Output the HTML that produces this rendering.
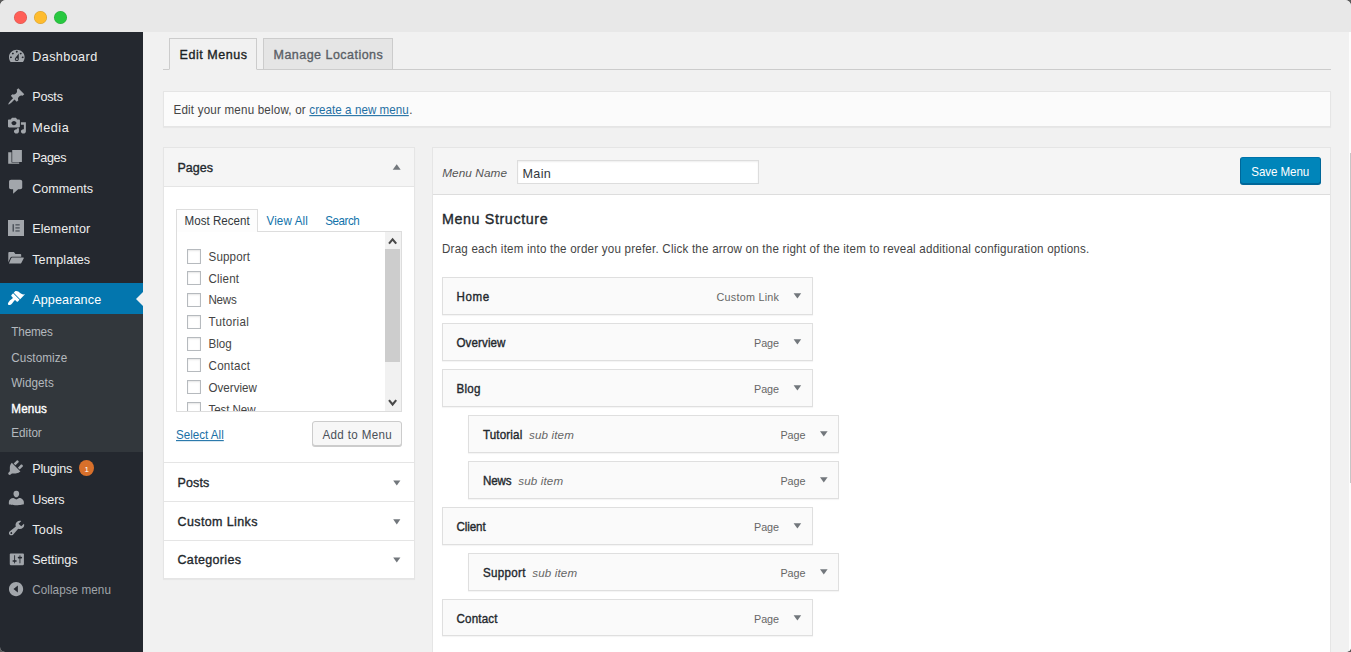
<!DOCTYPE html>
<html><head><meta charset="utf-8"><title>Menus</title><style>
*{margin:0;padding:0}
html,body{width:1351px;height:652px;overflow:hidden;background:#5a5a5a}
body{font-family:"Liberation Sans",sans-serif;}
#win{position:absolute;left:0;top:0;width:1351px;height:652px;overflow:hidden;border-radius:6px 6px 5px 5px;background:#f1f1f1}
.r{position:absolute;display:block}
.t{position:absolute;display:block;white-space:nowrap}
</style></head><body><div id="win">
<div class="r " style="left:0px;top:0px;width:1351px;height:32px;background:#e8e8e8;"></div><div class="r " style="left:13.8px;top:10.6px;width:13px;height:13px;background:#ff5f57;border-radius:50%;box-shadow:inset 0 0 0 .6px rgba(0,0,0,.16);"></div><div class="r " style="left:33.8px;top:10.6px;width:13px;height:13px;background:#febc2e;border-radius:50%;box-shadow:inset 0 0 0 .6px rgba(0,0,0,.16);"></div><div class="r " style="left:53.8px;top:10.6px;width:13px;height:13px;background:#28c840;border-radius:50%;box-shadow:inset 0 0 0 .6px rgba(0,0,0,.16);"></div><div class="r " style="left:0px;top:32px;width:143px;height:620px;background:#24282f;"></div><div class="r " style="left:0px;top:283px;width:143px;height:31px;background:#0376ae;"></div><div class="r " style="left:0px;top:314px;width:143px;height:138px;background:#32373c;"></div><div class="r" style="left:136px;top:291.5px;width:0;height:0;border:7px solid transparent;border-right-color:#f1f1f1;border-left-width:0"></div><svg class="r" style="left:6.54px;top:46.78px" width="19.62" height="18.77" viewBox="0 0 20 20" preserveAspectRatio="none"><path fill="#a2a6ab" d="M3.76 16h12.48c1.1-1.37 1.76-3.11 1.76-5 0-4.42-3.58-8-8-8s-8 3.58-8 8c0 1.89.66 3.63 1.76 5zM10 4c.55 0 1 .45 1 1s-.45 1-1 1-1-.45-1-1 .45-1 1-1zM6 6c.55 0 1 .45 1 1s-.45 1-1 1-1-.45-1-1 .45-1 1-1zm8 0c.55 0 1 .45 1 1s-.45 1-1 1-1-.45-1-1 .45-1 1-1zm-5.37 5.55L12 7v6c0 1.1-.9 2-2 2s-2-.9-2-2c0-.57.24-1.08.63-1.45zM4 10c.55 0 1 .45 1 1s-.45 1-1 1-1-.45-1-1 .45-1 1-1zm12 0c.55 0 1 .45 1 1s-.45 1-1 1-1-.45-1-1 .45-1 1-1zm-5 3c0-.55-.45-1-1-1s-1 .45-1 1 .45 1 1 1 1-.45 1-1z"/></svg><span class="t" style="left:32.2px;top:46.9px;font-size:12.60px;line-height:20px;color:#eee;letter-spacing:0.420px;">Dashboard</span><svg class="r" style="left:6.71px;top:86.56px" width="18.57" height="18.92" viewBox="0 0 20 20" preserveAspectRatio="none"><path fill="#a2a6ab" d="M10.44 3.02l1.82-1.82 6.36 6.35-1.83 1.82c-1.05-.68-2.48-.57-3.41.36l-.75.75c-.92.93-1.04 2.35-.35 3.41l-1.83 1.82-2.41-2.41-2.8 2.79c-.42.42-3.38 2.71-3.8 2.29s1.86-3.39 2.28-3.81l2.79-2.79L4.1 9.36l1.83-1.82c1.05.69 2.48.57 3.4-.36l.75-.75c.93-.92 1.05-2.35.36-3.41z"/></svg><span class="t" style="left:32.2px;top:86.6px;font-size:12.60px;line-height:20px;color:#eee;letter-spacing:-0.178px;">Posts</span><svg class="r" style="left:6.71px;top:117.13px" width="19.89" height="17.44" viewBox="0 0 20 20" preserveAspectRatio="none"><path fill="#a2a6ab" d="M13 11V4c0-.55-.45-1-1-1h-1.67L9 1H5L3.67 3H2c-.55 0-1 .45-1 1v7c0 .55.45 1 1 1h10c.55 0 1-.45 1-1zM7 4.5c1.38 0 2.5 1.12 2.5 2.5S8.38 9.5 7 9.5 4.500 8.380 4.500 7 5.620 4.500 7 4.500zM14 6h5v10.500c0 1.380-1.120 2.500-2.500 2.500S14 17.880 14 16.500s1.120-2.500 2.500-2.500c.170 0 .340.020.500.050V9h-3V6zm-4 8.050V13h2v3.500c0 1.380-1.120 2.500-2.500 2.500S7 17.880 7 16.500 8.120 14 9.500 14c.170 0 .340.020.500.050z"/></svg><span class="t" style="left:32.2px;top:117.9px;font-size:12.60px;line-height:20px;color:#eee;letter-spacing:0.546px;">Media</span><svg class="r" style="left:0;top:140px" width="40" height="40" viewBox="0 140 40 40"><path fill="#a2a6ab" d="M12.200 150h9.700v11.900h-9.700zM8.200 152.200h3.300v10.400h7.700v1.200H8.200z"/></svg><span class="t" style="left:32.2px;top:147.9px;font-size:12.60px;line-height:20px;color:#eee;letter-spacing:-0.332px;">Pages</span><svg class="r" style="left:5.65px;top:178.36px" width="20.31" height="17.38" viewBox="0 0 20 20" preserveAspectRatio="none"><path fill="#a2a6ab" d="M5 2h9c1.100 0 2 .900 2 2v7c0 1.100-.900 2-2 2h-2l-5 5v-5H5c-1.100 0-2-.900-2-2V4c0-1.100.900-2 2-2z"/></svg><span class="t" style="left:32.2px;top:178.8px;font-size:12.60px;line-height:20px;color:#eee;letter-spacing:0.012px;">Comments</span><svg class="r" style="left:8px;top:220px" width="16" height="16" viewBox="0 0 16 16"><rect x="0" y="0" width="16" height="16" fill="#a2a6ab"/><g fill="#4d535b"><rect x="4.500" y="4.200" width="1.500" height="7.400"/><rect x="7.400" y="4.200" width="4.300" height="1.300"/><rect x="7.400" y="7.250" width="4.300" height="1.300"/><rect x="7.400" y="10.300" width="4.300" height="1.300"/></g></svg><span class="t" style="left:32.2px;top:218.5px;font-size:12.60px;line-height:20px;color:#eee;letter-spacing:0.072px;">Elementor</span><svg class="r" style="left:0;top:240px" width="40" height="40" viewBox="0 240 40 40"><path fill="#a2a6ab" d="M8.300 253q0-.900.900-.900h4.700l1.500 1.800h4.900q.900 0 .900.900v1.900h-9.400q-.900 0-1.300.800l-2.200 4.800zM12.100 257.600h11.300q.700 0 .400.600l-2.500 4.700q-.300.500-1 .500H8.900l2.300-5.100q.300-.700.900-.700z"/></svg><span class="t" style="left:32.2px;top:249.9px;font-size:12.60px;line-height:20px;color:#eee;letter-spacing:0.072px;">Templates</span><svg class="r" style="left:6.45px;top:458.49px" width="19.19" height="19.22" viewBox="0 0 20 20" preserveAspectRatio="none"><path fill="#a2a6ab" d="M13.110 4.360L9.870 7.600 8 5.730l3.240-3.240c.350-.340 1.050-.200 1.560.320.520.510.660 1.210.310 1.550zm-8 1.770l.910-1.120 9.010 9.010-1.190.840c-.710.710-2.630 1.160-3.820 1.160H6.140L4.900 17.260c-.590.590-1.540.590-2.120 0-.590-.580-.590-1.530 0-2.120L4 13.900V10.040c0-1.190.400-3.200 1.110-3.910zm7.260 3.970l3.240-3.240c.340-.350 1.040-.210 1.550.310.520.510.660 1.210.310 1.550l-3.240 3.250z"/></svg><span class="t" style="left:32.2px;top:458.5px;font-size:12.60px;line-height:20px;color:#eee;letter-spacing:-0.187px;">Plugins</span><svg class="r" style="left:5.54px;top:488.80px" width="20.72" height="17.96" viewBox="0 0 20 20" preserveAspectRatio="none"><path fill="#a2a6ab" d="M10 9.250c-2.270 0-2.730-3.440-2.730-3.440C7 4.020 7.820 2 9.970 2c2.160 0 2.980 2.020 2.710 3.810 0 0-.410 3.440-2.680 3.440zm0 2.570L12.720 10c2.390 0 4.520 2.330 4.520 4.530v2.490s-3.650 1.130-7.240 1.130c-3.650 0-7.240-1.130-7.240-1.130v-2.490c0-2.250 1.940-4.480 4.470-4.480z"/></svg><span class="t" style="left:32.2px;top:490.1px;font-size:12.60px;line-height:20px;color:#eee;letter-spacing:-0.151px;">Users</span><svg class="r" style="left:6.59px;top:518.77px" width="19.12" height="18.12" viewBox="0 0 20 20" preserveAspectRatio="none"><path fill="#a2a6ab" d="M16.680 9.770c-1.340 1.340-3.300 1.670-4.950.990l-5.410 6.520c-.990.990-2.590.990-3.580 0s-.990-2.590 0-3.570l6.520-5.420c-.680-1.650-.350-3.610.990-4.950 1.280-1.280 3.120-1.620 4.720-1.060l-2.890 2.890 2.820 2.820 2.860-2.870c.530 1.580.180 3.390-1.080 4.650zM3.810 16.210c.400.390 1.040.390 1.430 0 .400-.400.400-1.040 0-1.430-.390-.400-1.030-.400-1.430 0-.390.390-.390 1.030 0 1.430z"/></svg><span class="t" style="left:32.2px;top:519.9px;font-size:12.60px;line-height:20px;color:#eee;letter-spacing:0.271px;">Tools</span><svg class="r" style="left:7.88px;top:550.69px" width="17.69" height="16.71" viewBox="0 0 20 20" preserveAspectRatio="none"><path fill="#a2a6ab" d="M18 16V4c0-.550-.450-1-1-1H3c-.550 0-1 .450-1 1v12c0 .550.450 1 1 1h14c.550 0 1-.450 1-1zM8 11h1c.550 0 1 .450 1 1s-.450 1-1 1H8v1.500c0 .280-.220.500-.500.500s-.500-.220-.500-.500V13H6c-.550 0-1-.450-1-1s.450-1 1-1h1V5.500c0-.280.220-.500.500-.500s.500.220.500.500V11zm5-2h-1c-.550 0-1-.450-1-1s.450-1 1-1h1V5.500c0-.280.220-.500.500-.500s.500.220.500.500V7h1c.550 0 1 .450 1 1s-.450 1-1 1h-1v5.500c0 .280-.220.500-.500.500s-.500-.220-.500-.500V9z"/></svg><span class="t" style="left:32.2px;top:549.5px;font-size:12.60px;line-height:20px;color:#eee;letter-spacing:-0.018px;">Settings</span><svg class="r" style="left:7.09px;top:288.99px" width="18.21" height="18.45" viewBox="0 0 20 20" preserveAspectRatio="none"><path fill="#fff" d="M14.480 11.060L7.410 3.990l1.500-1.500c.500-.560 2.300-.470 3.510.320 1.210.800 1.430 1.280 2.910 2.100 1.180.640 2.450 1.260 4.450.850zm-.710.710L6.700 4.700 4.930 6.470c-.390.390-.390 1.020 0 1.410l1.060 1.060c.390.390.390 1.030 0 1.420-.600.600-1.430 1.110-2.210 1.690-.350.260-.700.530-1.010.840C1.430 14.230.400 16.080 1.400 17.070c.990 1 2.840-.030 4.180-1.360.310-.310.580-.660.850-1.020.570-.780 1.080-1.610 1.690-2.210.390-.390 1.020-.390 1.410 0l1.060 1.060c.390.390 1.020.390 1.410 0z"/></svg><span class="t" style="left:32.2px;top:290.3px;font-size:12.60px;line-height:20px;color:#fff;letter-spacing:0.117px;">Appearance</span><svg class="r" style="left:6.94px;top:580.04px" width="18.11" height="18.11" viewBox="0 0 20 20" preserveAspectRatio="none"><path fill="#a2a6ab" d="M10 2.160c4.330 0 7.840 3.510 7.840 7.840s-3.510 7.840-7.840 7.840S2.160 14.330 2.160 10 5.670 2.160 10 2.160zm2 11.720V6.120L7.120 10z"/></svg><span class="t" style="left:32.2px;top:579.8px;font-size:11.70px;line-height:20px;color:#a0a5aa;letter-spacing:0.063px;transform:scaleY(1.080);transform-origin:0 14.05px;">Collapse menu</span><span class="t" style="left:11.3px;top:322.4px;font-size:11.70px;line-height:20px;color:#b4b9be;letter-spacing:-0.153px;transform:scaleY(1.080);transform-origin:0 14.05px;">Themes</span><span class="t" style="left:11.3px;top:347.7px;font-size:11.70px;line-height:20px;color:#b4b9be;letter-spacing:0.092px;transform:scaleY(1.080);transform-origin:0 14.05px;">Customize</span><span class="t" style="left:11.3px;top:372.7px;font-size:11.70px;line-height:20px;color:#b4b9be;letter-spacing:0.039px;transform:scaleY(1.080);transform-origin:0 14.05px;">Widgets</span><span class="t" style="left:11.3px;top:398.6px;font-size:11.70px;line-height:20px;color:#fff;letter-spacing:0.146px;-webkit-text-stroke:0.35px #fff;transform:scaleY(1.080);transform-origin:0 14.05px;">Menus</span><span class="t" style="left:11.3px;top:423.3px;font-size:11.70px;line-height:20px;color:#b4b9be;letter-spacing:-0.013px;transform:scaleY(1.080);transform-origin:0 14.05px;">Editor</span><div class="r " style="left:79px;top:460.2px;width:15px;height:15.8px;background:#d8702b;border-radius:50%;"></div><span class="t" style="left:84.4px;top:464.5px;font-size:8.00px;line-height:10px;color:#fff;">1</span><div class="r " style="left:143px;top:32px;width:1208px;height:620px;background:#f1f1f1;"></div><div class="r " style="left:1349px;top:32px;width:2px;height:620px;background:#fcfcfc;"></div><div class="r " style="left:1350px;top:153px;width:1px;height:330px;background:#c6c6c6;"></div><div class="r " style="left:163px;top:69px;width:1168px;height:1px;background:#ccc;"></div><div class="r " style="left:169px;top:38px;width:88px;height:32px;background:#f1f1f1;border:1px solid #ccc;border-bottom:1px solid #f1f1f1;box-sizing:border-box;"></div><div class="r " style="left:263px;top:38px;width:130px;height:32px;background:#e5e5e5;border:1px solid #ccc;box-sizing:border-box;"></div><span class="t" style="left:179.5px;top:44.6px;font-size:12.50px;line-height:20px;color:#1b1f23;letter-spacing:0.552px;-webkit-text-stroke:0.35px #1b1f23;">Edit Menus</span><span class="t" style="left:273.5px;top:44.6px;font-size:12.50px;line-height:20px;color:#5a5f66;letter-spacing:0.476px;-webkit-text-stroke:0.35px #5a5f66;">Manage Locations</span><div class="r " style="left:163px;top:91px;width:1168px;height:36px;background:#fbfbfb;border:1px solid #e5e5e5;box-sizing:border-box;box-shadow:0 1px 1px rgba(0,0,0,.04);"></div><span class="t" style="left:173.5px;top:99.6px;font-size:11.60px;line-height:20px;color:#444;letter-spacing:0.201px;transform:scaleY(1.080);transform-origin:0 14.02px;">Edit your menu below, or</span><span class="t" style="left:309.3px;top:99.6px;font-size:11.60px;line-height:20px;color:#1f6fa3;letter-spacing:0.053px;transform:scaleY(1.080);transform-origin:0 14.02px;text-decoration:underline;">create a new menu</span><span class="t" style="left:409.2px;top:99.6px;font-size:11.60px;line-height:20px;color:#444;transform:scaleY(1.080);transform-origin:0 14.02px;">.</span><div class="r " style="left:163px;top:147px;width:252px;height:432px;background:#fff;border:1px solid #e5e5e5;box-sizing:border-box;box-shadow:0 1px 1px rgba(0,0,0,.04);"></div><div class="r " style="left:164px;top:148px;width:250px;height:38px;background:#f5f5f5;"></div><div class="r " style="left:164px;top:186px;width:250px;height:1px;background:#e5e5e5;"></div><span class="t" style="left:177.5px;top:157.6px;font-size:12.50px;line-height:20px;color:#23282d;letter-spacing:0.014px;-webkit-text-stroke:0.35px #23282d;">Pages</span><svg class="r" style="left:0;top:0" width="1351" height="652"><polygon fill="#72777c" points="392.7,169.75 400.7,169.75 396.7,164.25"/></svg><div class="r " style="left:176px;top:231px;width:226px;height:181px;background:#fff;border:1px solid #ddd;box-sizing:border-box;"></div><div class="r " style="left:176px;top:209px;width:82px;height:23px;background:#fdfdfd;border:1px solid #ddd;box-sizing:border-box;border-bottom:none;"></div><span class="t" style="left:184.5px;top:210.5px;font-size:11.60px;line-height:20px;color:#32373c;letter-spacing:0.019px;transform:scaleY(1.080);transform-origin:0 14.02px;">Most Recent</span><span class="t" style="left:266.5px;top:210.5px;font-size:11.60px;line-height:20px;color:#1173ab;letter-spacing:0.128px;transform:scaleY(1.080);transform-origin:0 14.02px;">View All</span><span class="t" style="left:325.2px;top:210.5px;font-size:11.60px;line-height:20px;color:#1173ab;letter-spacing:-0.431px;transform:scaleY(1.080);transform-origin:0 14.02px;">Search</span><div class="r" style="left:177px;top:232px;width:208px;height:179px;overflow:hidden"><div class="r " style="left:10px;top:17px;width:14px;height:15px;background:#fff;border:1px solid #b6babe;box-sizing:border-box;box-shadow:inset 0 1px 2px rgba(0,0,0,.1);"></div><span class="t" style="left:31.5px;top:14.6px;font-size:11.60px;line-height:20px;color:#444;letter-spacing:0.145px;transform:scaleY(1.080);transform-origin:0 14.02px;">Support</span><div class="r " style="left:10px;top:39px;width:14px;height:14px;background:#fff;border:1px solid #b6babe;box-sizing:border-box;box-shadow:inset 0 1px 2px rgba(0,0,0,.1);"></div><span class="t" style="left:31.5px;top:36.5px;font-size:11.60px;line-height:20px;color:#444;letter-spacing:0.169px;transform:scaleY(1.080);transform-origin:0 14.02px;">Client</span><div class="r " style="left:10px;top:61px;width:14px;height:14px;background:#fff;border:1px solid #b6babe;box-sizing:border-box;box-shadow:inset 0 1px 2px rgba(0,0,0,.1);"></div><span class="t" style="left:31.5px;top:58.3px;font-size:11.60px;line-height:20px;color:#444;letter-spacing:-0.268px;transform:scaleY(1.080);transform-origin:0 14.02px;">News</span><div class="r " style="left:10px;top:83px;width:14px;height:14px;background:#fff;border:1px solid #b6babe;box-sizing:border-box;box-shadow:inset 0 1px 2px rgba(0,0,0,.1);"></div><span class="t" style="left:31.5px;top:80.2px;font-size:11.60px;line-height:20px;color:#444;letter-spacing:0.293px;transform:scaleY(1.080);transform-origin:0 14.02px;">Tutorial</span><div class="r " style="left:10px;top:105px;width:14px;height:14px;background:#fff;border:1px solid #b6babe;box-sizing:border-box;box-shadow:inset 0 1px 2px rgba(0,0,0,.1);"></div><span class="t" style="left:31.5px;top:102.0px;font-size:11.60px;line-height:20px;color:#444;letter-spacing:0.028px;transform:scaleY(1.080);transform-origin:0 14.02px;">Blog</span><div class="r " style="left:10px;top:126px;width:14px;height:14px;background:#fff;border:1px solid #b6babe;box-sizing:border-box;box-shadow:inset 0 1px 2px rgba(0,0,0,.1);"></div><span class="t" style="left:31.5px;top:123.9px;font-size:11.60px;line-height:20px;color:#444;letter-spacing:0.254px;transform:scaleY(1.080);transform-origin:0 14.02px;">Contact</span><div class="r " style="left:10px;top:148px;width:14px;height:14px;background:#fff;border:1px solid #b6babe;box-sizing:border-box;box-shadow:inset 0 1px 2px rgba(0,0,0,.1);"></div><span class="t" style="left:31.5px;top:145.7px;font-size:11.60px;line-height:20px;color:#444;letter-spacing:0.008px;transform:scaleY(1.080);transform-origin:0 14.02px;">Overview</span><div class="r " style="left:10px;top:170px;width:14px;height:14px;background:#fff;border:1px solid #b6babe;box-sizing:border-box;box-shadow:inset 0 1px 2px rgba(0,0,0,.1);"></div><span class="t" style="left:31.5px;top:167.6px;font-size:11.60px;line-height:20px;color:#444;letter-spacing:-0.086px;transform:scaleY(1.080);transform-origin:0 14.02px;">Test New</span></div><div class="r " style="left:385px;top:232px;width:16px;height:179px;background:#f1f1f1;"></div><div class="r " style="left:385px;top:249px;width:15px;height:112.5px;background:#cdcdcd;"></div><svg class="r" style="left:385px;top:232px" width="16" height="179" viewBox="0 0 16 179"><path d="M4.000 11.600L7.600 7.300 11.200 11.600" fill="none" stroke="#484848" stroke-width="2.100"/><path d="M4.000 168.200L7.600 172.500 11.200 168.200" fill="none" stroke="#484848" stroke-width="2.100"/></svg><span class="t" style="left:176.0px;top:425.4px;font-size:11.60px;line-height:20px;color:#1a70a6;letter-spacing:0.010px;transform:scaleY(1.080);transform-origin:0 14.02px;text-decoration:underline;">Select All</span><div class="r " style="left:312px;top:421px;width:90px;height:25px;background:#f7f7f7;border:1px solid #ccc;box-sizing:border-box;border-radius:3px;box-shadow:0 1px 0 #ccc;"></div><span class="t" style="left:322.5px;top:424.5px;font-size:11.60px;line-height:20px;color:#4a5058;letter-spacing:0.342px;transform:scaleY(1.080);transform-origin:0 14.02px;">Add to Menu</span><div class="r " style="left:164px;top:462px;width:250px;height:1px;background:#e5e5e5;"></div><div class="r " style="left:164px;top:501px;width:250px;height:1px;background:#e5e5e5;"></div><div class="r " style="left:164px;top:540px;width:250px;height:1px;background:#e5e5e5;"></div><span class="t" style="left:177.5px;top:472.5px;font-size:12.50px;line-height:20px;color:#23282d;letter-spacing:0.134px;-webkit-text-stroke:0.35px #23282d;">Posts</span><span class="t" style="left:177.5px;top:511.5px;font-size:12.50px;line-height:20px;color:#23282d;letter-spacing:0.389px;-webkit-text-stroke:0.35px #23282d;">Custom Links</span><span class="t" style="left:177.5px;top:549.8px;font-size:12.50px;line-height:20px;color:#23282d;letter-spacing:0.339px;-webkit-text-stroke:0.35px #23282d;">Categories</span><svg class="r" style="left:0;top:0" width="1351" height="652"><polygon fill="#72777c" points="393.2,480.4 400.4,480.4 396.8,485.6"/></svg><svg class="r" style="left:0;top:0" width="1351" height="652"><polygon fill="#72777c" points="393.2,519.3 400.4,519.3 396.8,524.5"/></svg><svg class="r" style="left:0;top:0" width="1351" height="652"><polygon fill="#72777c" points="393.2,557.4 400.4,557.4 396.8,562.6"/></svg><div class="r " style="left:432px;top:147px;width:899px;height:520px;background:#fff;border:1px solid #e5e5e5;box-sizing:border-box;"></div><div class="r " style="left:433px;top:148px;width:897px;height:46px;background:#f5f5f5;"></div><div class="r " style="left:433px;top:194px;width:897px;height:1px;background:#dddddd;"></div><span class="t" style="left:442.2px;top:162.6px;font-size:11.80px;line-height:20px;color:#555;letter-spacing:0.066px;font-style:italic;">Menu Name</span><div class="r " style="left:517px;top:160px;width:242px;height:24px;background:#fff;border:1px solid #ddd;box-sizing:border-box;box-shadow:inset 0 1px 2px rgba(0,0,0,.07);"></div><span class="t" style="left:522.5px;top:164.0px;font-size:12.60px;line-height:20px;color:#32373c;letter-spacing:0.330px;">Main</span><div class="r " style="left:1240px;top:157px;width:81px;height:27px;background:#0085ba;box-sizing:border-box;border:1px solid;border-color:#0073aa #006799 #006799;border-radius:3px;box-shadow:0 1px 0 #006799;"></div><span class="t" style="left:1251.3px;top:162.2px;font-size:11.60px;line-height:20px;color:#fff;letter-spacing:-0.085px;transform:scaleY(1.080);transform-origin:0 14.02px;">Save Menu</span><span class="t" style="left:442.0px;top:209.4px;font-size:14.30px;line-height:20px;color:#23282d;letter-spacing:0.603px;-webkit-text-stroke:0.35px #23282d;transform:scaleY(1.050);transform-origin:0 14.95px;">Menu Structure</span><span class="t" style="left:442.0px;top:239.0px;font-size:11.60px;line-height:20px;color:#444;letter-spacing:0.213px;transform:scaleY(1.080);transform-origin:0 14.02px;">Drag each item into the order you prefer. Click the arrow on the right of the item to reveal additional configuration options.</span><div class="r " style="left:442px;top:277px;width:371px;height:38px;background:#fafafa;border:1px solid #dfdfdf;box-sizing:border-box;box-shadow:0 1px 1px rgba(0,0,0,.04);"></div><span class="t" style="left:456.5px;top:287.2px;font-size:11.60px;line-height:20px;color:#23282d;letter-spacing:0.586px;-webkit-text-stroke:0.35px #23282d;transform:scaleY(1.080);transform-origin:0 14.02px;">Home</span><span class="t" style="left:716.5px;top:286.6px;font-size:10.80px;line-height:20px;color:#666;letter-spacing:0.248px;">Custom Link</span><svg class="r" style="left:0;top:0" width="1351" height="652"><polygon fill="#72777c" points="793.6,293.15 801.2,293.15 797.4,298.45"/></svg><div class="r " style="left:442px;top:323px;width:371px;height:38px;background:#fafafa;border:1px solid #dfdfdf;box-sizing:border-box;box-shadow:0 1px 1px rgba(0,0,0,.04);"></div><span class="t" style="left:456.5px;top:333.2px;font-size:11.60px;line-height:20px;color:#23282d;letter-spacing:0.094px;-webkit-text-stroke:0.35px #23282d;transform:scaleY(1.080);transform-origin:0 14.02px;">Overview</span><span class="t" style="left:754.0px;top:332.6px;font-size:10.80px;line-height:20px;color:#666;letter-spacing:-0.074px;">Page</span><svg class="r" style="left:0;top:0" width="1351" height="652"><polygon fill="#72777c" points="793.6,339.15 801.2,339.15 797.4,344.45"/></svg><div class="r " style="left:442px;top:369px;width:371px;height:38px;background:#fafafa;border:1px solid #dfdfdf;box-sizing:border-box;box-shadow:0 1px 1px rgba(0,0,0,.04);"></div><span class="t" style="left:456.5px;top:379.2px;font-size:11.60px;line-height:20px;color:#23282d;letter-spacing:0.261px;-webkit-text-stroke:0.35px #23282d;transform:scaleY(1.080);transform-origin:0 14.02px;">Blog</span><span class="t" style="left:754.0px;top:378.6px;font-size:10.80px;line-height:20px;color:#666;letter-spacing:-0.074px;">Page</span><svg class="r" style="left:0;top:0" width="1351" height="652"><polygon fill="#72777c" points="793.6,385.15 801.2,385.15 797.4,390.45"/></svg><div class="r " style="left:468px;top:415px;width:371px;height:38px;background:#fafafa;border:1px solid #dfdfdf;box-sizing:border-box;box-shadow:0 1px 1px rgba(0,0,0,.04);"></div><span class="t" style="left:482.9px;top:425.2px;font-size:11.60px;line-height:20px;color:#23282d;letter-spacing:0.164px;-webkit-text-stroke:0.35px #23282d;transform:scaleY(1.080);transform-origin:0 14.02px;">Tutorial</span><span class="t" style="left:529.0px;top:425.2px;font-size:11.60px;line-height:20px;color:#666;letter-spacing:0.152px;font-style:italic;">sub item</span><span class="t" style="left:780.4px;top:424.6px;font-size:10.80px;line-height:20px;color:#666;letter-spacing:-0.074px;">Page</span><svg class="r" style="left:0;top:0" width="1351" height="652"><polygon fill="#72777c" points="820,431.15 827.6,431.15 823.8,436.45"/></svg><div class="r " style="left:468px;top:461px;width:371px;height:38px;background:#fafafa;border:1px solid #dfdfdf;box-sizing:border-box;box-shadow:0 1px 1px rgba(0,0,0,.04);"></div><span class="t" style="left:482.9px;top:471.2px;font-size:11.60px;line-height:20px;color:#23282d;letter-spacing:-0.135px;-webkit-text-stroke:0.35px #23282d;transform:scaleY(1.080);transform-origin:0 14.02px;">News</span><span class="t" style="left:518.2px;top:471.2px;font-size:11.60px;line-height:20px;color:#666;letter-spacing:0.152px;font-style:italic;">sub item</span><span class="t" style="left:780.4px;top:470.6px;font-size:10.80px;line-height:20px;color:#666;letter-spacing:-0.074px;">Page</span><svg class="r" style="left:0;top:0" width="1351" height="652"><polygon fill="#72777c" points="820,477.15 827.6,477.15 823.8,482.45"/></svg><div class="r " style="left:442px;top:507px;width:371px;height:38px;background:#fafafa;border:1px solid #dfdfdf;box-sizing:border-box;box-shadow:0 1px 1px rgba(0,0,0,.04);"></div><span class="t" style="left:456.5px;top:517.2px;font-size:11.60px;line-height:20px;color:#23282d;letter-spacing:-0.091px;-webkit-text-stroke:0.35px #23282d;transform:scaleY(1.080);transform-origin:0 14.02px;">Client</span><span class="t" style="left:754.0px;top:516.6px;font-size:10.80px;line-height:20px;color:#666;letter-spacing:-0.074px;">Page</span><svg class="r" style="left:0;top:0" width="1351" height="652"><polygon fill="#72777c" points="793.6,523.15 801.2,523.15 797.4,528.45"/></svg><div class="r " style="left:468px;top:553px;width:371px;height:38px;background:#fafafa;border:1px solid #dfdfdf;box-sizing:border-box;box-shadow:0 1px 1px rgba(0,0,0,.04);"></div><span class="t" style="left:482.9px;top:563.2px;font-size:11.60px;line-height:20px;color:#23282d;letter-spacing:0.329px;-webkit-text-stroke:0.35px #23282d;transform:scaleY(1.080);transform-origin:0 14.02px;">Support</span><span class="t" style="left:532.2px;top:563.2px;font-size:11.60px;line-height:20px;color:#666;letter-spacing:0.152px;font-style:italic;">sub item</span><span class="t" style="left:780.4px;top:562.6px;font-size:10.80px;line-height:20px;color:#666;letter-spacing:-0.074px;">Page</span><svg class="r" style="left:0;top:0" width="1351" height="652"><polygon fill="#72777c" points="820,569.15 827.6,569.15 823.8,574.45"/></svg><div class="r " style="left:442px;top:599px;width:371px;height:37px;background:#fafafa;border:1px solid #dfdfdf;box-sizing:border-box;box-shadow:0 1px 1px rgba(0,0,0,.04);"></div><span class="t" style="left:456.5px;top:609.2px;font-size:11.60px;line-height:20px;color:#23282d;letter-spacing:0.171px;-webkit-text-stroke:0.35px #23282d;transform:scaleY(1.080);transform-origin:0 14.02px;">Contact</span><span class="t" style="left:754.0px;top:608.6px;font-size:10.80px;line-height:20px;color:#666;letter-spacing:-0.074px;">Page</span><svg class="r" style="left:0;top:0" width="1351" height="652"><polygon fill="#72777c" points="793.6,615.15 801.2,615.15 797.4,620.45"/></svg>
</div></body></html>
